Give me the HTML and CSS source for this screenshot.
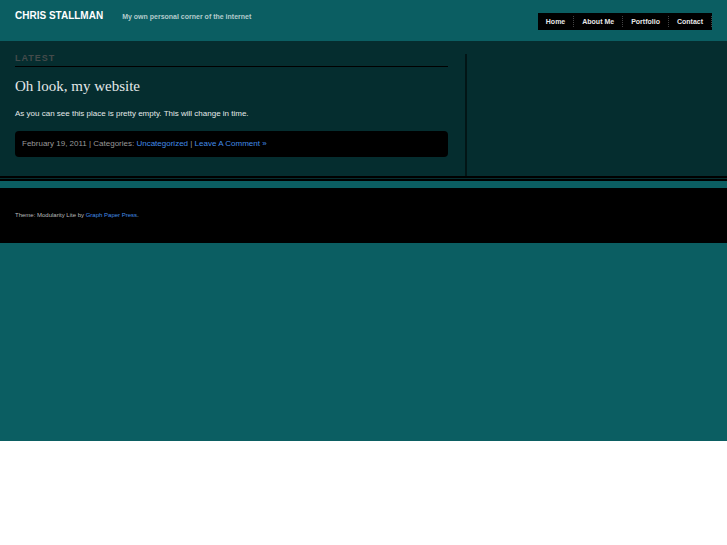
FILE: index.html
```html
<!DOCTYPE html>
<html lang="en">
<head>
<meta charset="utf-8">
<title>Chris Stallman</title>
<link rel="stylesheet" href="styles.css">
</head>
<body>
<div class="page">
  <header class="masthead">
    <h1 class="site-name"><a href="#">CHRIS STALLMAN</a></h1>
    <p class="tagline">My own personal corner of the internet</p>
    <nav class="nav">
      <a href="#">Home</a>
      <a href="#">About Me</a>
      <a href="#">Portfolio</a>
      <a href="#">Contact</a>
    </nav>
  </header>
  <div class="main">
    <main class="content">
      <h2 class="section-title">LATEST</h2>
      <article>
        <h3 class="post-title"><a href="#">Oh look, my website</a></h3>
        <p class="post-text">As you can see this place is pretty empty. This will change in time.</p>
        <p class="post-meta">February 19, 2011 | Categories: <a href="#">Uncategorized</a> | <a href="#">Leave A Comment »</a></p>
      </article>
    </main>
    <aside class="sidebar"></aside>
  </div>
  <footer class="footer">
    <p>Theme: Modularity Lite by <a href="#">Graph Paper Press</a>.</p>
  </footer>
</div>
</body>
</html>
```
FILE: styles.css
```css
* {
  box-sizing: border-box;
}

body {
  margin: 0;
  background: #fff;
  color: #e4e9e9;
  font-family: "Liberation Sans", Arial, sans-serif;
  font-size: 8px;
}

h1, h2, h3, p {
  margin: 0;
}

a {
  color: #428ce7;
  text-decoration: none;
}

.page {
  min-height: 81vh;
  background: #0b5e62;
}

.masthead {
  display: flex;
  align-items: flex-start;
  padding: 10px 15px 11px;
}

.site-name {
  margin-right: 19px;
  font-size: 10px;
  line-height: 12px;
}

.site-name a {
  color: #fff;
}

.tagline {
  color: #b4cccd;
  font-size: 7px;
  font-weight: bold;
  line-height: 14px;
}

.nav {
  display: flex;
  margin: 3px 0 0 auto;
  padding: 3px 0;
  background: #000;
}

.nav a {
  padding: 0 8px;
  border-right: 1px dotted #444;
  color: #e8e8e8;
  font-size: 7px;
  font-weight: bold;
  line-height: 11px;
}

.main {
  display: grid;
  grid-template-columns: 433fr 247fr;
  gap: 17px;
  padding: 13px 15px 0;
  border-bottom: 5px double #000;
  background: #052d2f;
}

.content {
  padding-bottom: 19px;
}

.section-title {
  padding-bottom: 4px;
  border-bottom: 1px solid #000;
  color: #444b4b;
  font-size: 9px;
  line-height: 8px;
  letter-spacing: 1px;
}

.post-title {
  margin-top: 10px;
  font-family: "Liberation Serif", "Times New Roman", serif;
  font-size: 15px;
  font-weight: normal;
  line-height: 18px;
}

.post-title a {
  color: #e4e9e9;
}

.post-text {
  margin-top: 13px;
  line-height: 12px;
}

.post-meta {
  margin-top: 11px;
  padding: 7px;
  border-radius: 4px;
  background: #000;
  color: #999;
  line-height: 12px;
}

.sidebar {
  border-left: 2px solid #021516;
}

.footer {
  margin-top: 7px;
  padding: 21px 15px 22px;
  background: #000;
  color: #bbb;
  font-size: 6px;
  line-height: 12px;
}
```
